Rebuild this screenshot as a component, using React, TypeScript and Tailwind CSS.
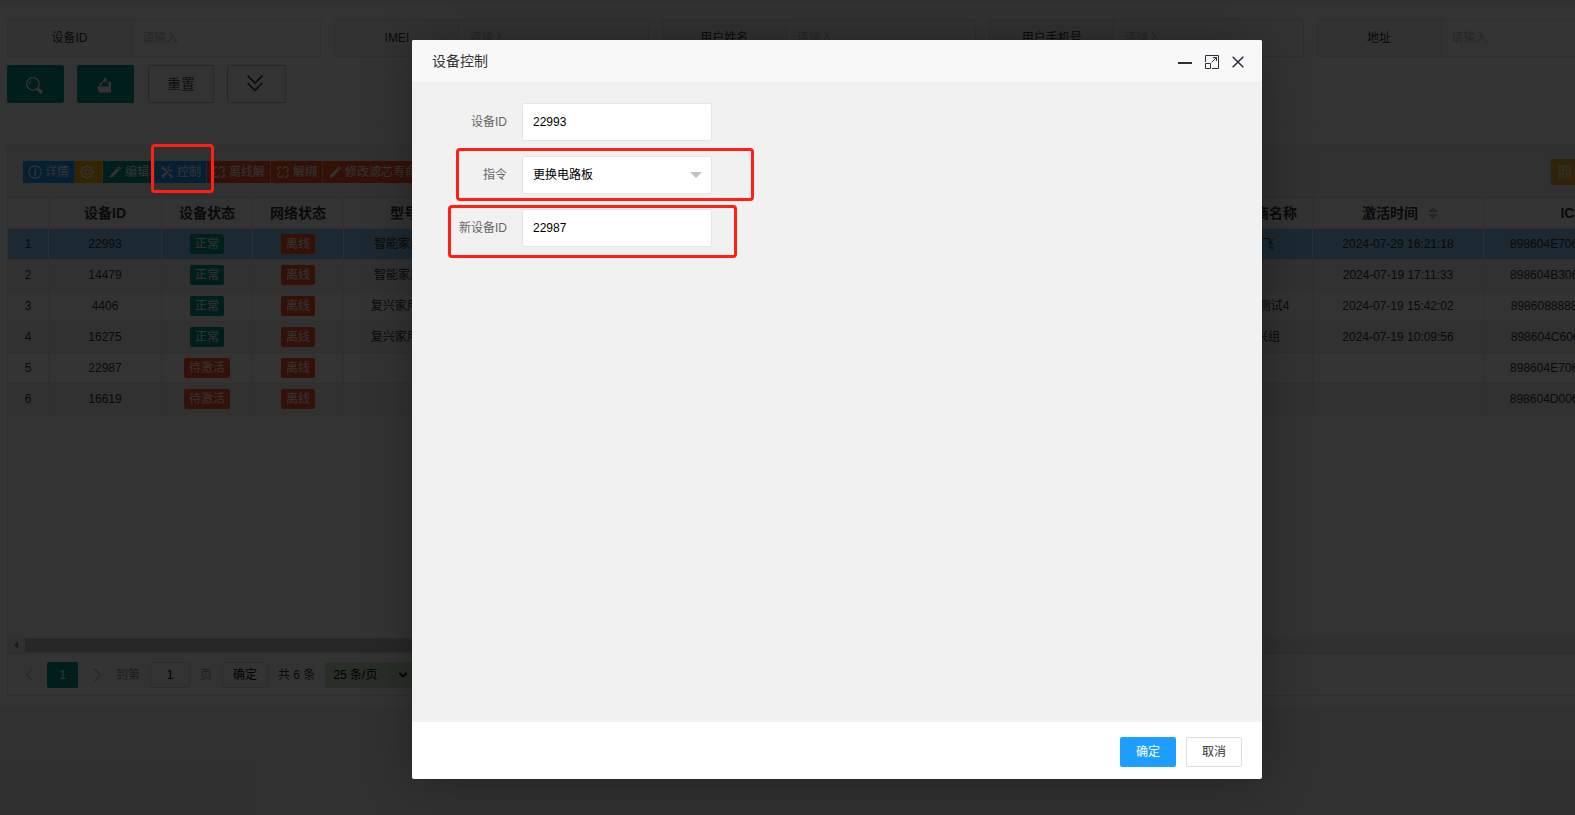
import type { ReactNode } from 'react';
import { ChevronDown } from 'lucide-react';

const filters = ['设备ID', 'IMEI', '用户姓名', '用户手机号', '地址'];

type Device = {
  id: string;
  active: boolean;
  model: string;
  vendor: string;
  time: string;
  iccid: string;
};

const devices: Device[] = [
  { id: '22993', active: true, model: '智能家居款', vendor: '小飞', time: '2024-07-29 16:21:18', iccid: '898604E70623D001C345' },
  { id: '14479', active: true, model: '智能家居款', vendor: '', time: '2024-07-19 17:11:33', iccid: '898604B30623D001C346' },
  { id: '4406', active: true, model: '复兴家用款1', vendor: '公司测试4', time: '2024-07-19 15:42:02', iccid: '8986088888012D4C5678' },
  { id: '16275', active: true, model: '复兴家用款1', vendor: '复兴组', time: '2024-07-19 10:09:56', iccid: '898604C60623D0012348' },
  { id: '22987', active: false, model: '', vendor: '', time: '', iccid: '898604E70623D001C349' },
  { id: '16619', active: false, model: '', vendor: '', time: '', iccid: '898604D00623D001C350' },
];

function Icon({ children, className = 'size-3.5' }: { children: ReactNode; className?: string }) {
  return (
    <svg viewBox="0 0 16 16" className={className} fill="none" stroke="currentColor" strokeWidth="1.2" aria-hidden="true">
      {children}
    </svg>
  );
}

const InfoIcon = () => (
  <Icon>
    <circle cx="8" cy="8" r="7" />
    <path d="M7 6.8h1.6L7.6 11.6h1.4M8.6 3.8v1.4" strokeWidth="1.4" />
  </Icon>
);

const GearIcon = () => (
  <Icon>
    <circle cx="8" cy="8" r="3" />
    <path d="M6.500 2.700 7 .700h2l.500 2 1.200.500 1.800-1.100 1.400 1.400-1.100 1.800.500 1.200 2 .500v2l-2 .500-.500 1.200 1.100 1.800-1.400 1.400-1.800-1.100-1.200.500-.500 2H7l-.500-2-1.200-.500-1.800 1.100-1.400-1.400 1.100-1.800-.500-1.200-2-.500V7l2-.500.500-1.200-1.100-1.800 1.400-1.400 1.800 1.100z" strokeLinejoin="round" />
  </Icon>
);

const PenIcon = () => (
  <Icon>
    <path d="M2 14.500l.8-3.200L10.600 3.500l2.400 2.400L5.200 13.700z M11.400 2.700l1.200-1.200 2.400 2.400-1.200 1.200z" fill="currentColor" stroke="none" />
  </Icon>
);

const ToolsIcon = () => (
  <Icon>
    <path d="M2.500 13.500L9 7.500M10 10l4 4M3 3l4 4" strokeWidth="2.400" />
    <path d="M1.500 4.500L4.500 1.500M11 1.500a3 3 0 0 0-1.500 4 3 3 0 0 0 4.800 0M1.500 11.500l3 3" strokeWidth="1.600" />
  </Icon>
);

const UnlinkIcon = () => (
  <Icon>
    <path d="M7.500 4.500L9 3a2.800 2.800 0 0 1 4 4l-1.500 1.500M8.500 11.500L7 13a2.800 2.800 0 0 1-4-4l1.500-1.500M5 1v2.500M1 4.500h2.500M2 1.800l1.500 1.500M11 15v-2.500M15 11.500h-2.500M14 14.200l-1.500-1.500" strokeWidth="1.400" />
  </Icon>
);

const actions: { label: string; color: string; icon: ReactNode }[] = [
  { label: '详情', color: 'bg-[#1e9fff]', icon: <InfoIcon /> },
  { label: '', color: 'bg-[#ffb800]', icon: <GearIcon /> },
  { label: '编辑', color: 'bg-[#009688]', icon: <PenIcon /> },
  { label: '控制', color: 'bg-[#1e9fff]', icon: <ToolsIcon /> },
  { label: '离线解', color: 'bg-[#ff5722]', icon: <UnlinkIcon /> },
  { label: '解绑', color: 'bg-[#ff5722]', icon: <UnlinkIcon /> },
  { label: '修改滤芯寿命', color: 'bg-[#ff5722]', icon: <PenIcon /> },
];

function Badge({ ok, children }: { ok: boolean; children: ReactNode }) {
  return (
    <span className={`inline-block h-5 rounded-xs px-[5px] align-middle leading-5 text-white ${ok ? 'bg-[#009688]' : 'bg-[#ff5722]'}`}>
      {children}
    </span>
  );
}

function SearchPanel() {
  return (
    <form className="border-b border-[#eee] px-[7px] pt-[15px] pb-[21px]" onSubmit={(e) => e.preventDefault()}>
      <div className="grid grid-cols-5 gap-[13px]">
        {filters.map((name) => (
          <div key={name} className="flex h-[38px] rounded-xs border border-[#e6e6e6]">
            <label htmlFor={`filter-${name}`} className="w-[124px] shrink-0 border-r border-[#e6e6e6] bg-[#fbfbfb] text-center leading-9">
              {name}
            </label>
            <input id={`filter-${name}`} placeholder="请输入" className="min-w-0 flex-1 px-2.5 placeholder:text-[#c0c0c0]" />
          </div>
        ))}
      </div>
      <div className="mt-2 flex h-[38px]">
        <button aria-label="搜索" className="mr-[13px] flex w-[57px] items-center justify-center rounded-xs bg-[#009688] pt-0.5 pr-[3px] text-white">
          <Icon className="size-[18px]">
            <circle cx="7" cy="7" r="5.600" />
            <path d="M4 7.500a3 3 0 0 1 1.500-3" strokeWidth="1" />
            <path d="M11 11l4 4" strokeWidth="2.800" />
          </Icon>
        </button>
        <button aria-label="导出" className="mr-3.5 flex w-[57px] items-center justify-center rounded-xs bg-[#009688] pt-0.5 pr-[3px] text-white">
          <Icon className="size-4">
            <path d="M1 9.500h2.500V6H6v1.200H4.700v2.300h7.800V6.200H11V5h4v10.500H3.200z" fill="currentColor" stroke="none" />
            <path d="M6.500 6.500c0-2.500.5-3.500 2.500-3.500M8.500 1L11 3 8.500 5z" fill="currentColor" strokeWidth="1" />
          </Icon>
        </button>
        <button className="mr-[13px] w-[66px] rounded-xs border border-[#c9c9c9] text-sm text-[#555]">重置</button>
        <button aria-label="展开" className="flex w-[59px] items-center justify-center rounded-xs border border-[#c9c9c9] pr-[3px] pb-0.5">
          <Icon className="size-[18px]">
            <path d="M1.500 1.500L8 8l6.500-6.500M1.500 8L8 14.500 14.500 8" strokeWidth="1.500" />
          </Icon>
        </button>
      </div>
    </form>
  );
}

function DeviceTable() {
  const cell = 'border-r border-b border-[#eaeaea] text-center';
  return (
    <div className="h-[439px] overflow-hidden">
      <table className="w-[1800px] table-fixed border-separate border-spacing-0">
        <colgroup>
          <col className="w-[41px]" />
          <col className="w-[113px]" />
          <col className="w-[91px]" />
          <col className="w-[91px]" />
          <col className="w-[121px]" />
          <col />
          <col className="w-[101px]" />
          <col className="w-[171px]" />
          <col className="w-[192px]" />
          <col className="w-[132px]" />
        </colgroup>
        <thead>
          <tr className="h-[31px] text-sm">
            {['', '设备ID', '设备状态', '网络状态', '型号', '用户', '供应商名称'].map((h) => (
              <th key={h} className={cell}>{h}</th>
            ))}
            <th className={cell}>
              <span className="flex items-center justify-center gap-2.5 pl-1">
                激活时间
                <svg viewBox="0 0 10 12" className="h-3 w-2.5 fill-[#b2b2b2]" aria-hidden="true">
                  <path d="M5 0l5 5H0zM0 7h10l-5 5z" />
                </svg>
              </span>
            </th>
            <th className={cell}>ICCID</th>
            <th className={cell}>备注</th>
          </tr>
        </thead>
        <tbody>
          {devices.map((d, i) => (
            <tr key={d.id} className={`h-[31px] ${i === 0 ? 'bg-[#8accf8]' : i % 2 ? 'bg-[#f2f2f2]' : 'bg-white'}`}>
              <td className={cell}>{i + 1}</td>
              <td className={cell}>{d.id}</td>
              <td className={cell}><Badge ok={d.active}>{d.active ? '正常' : '待激活'}</Badge></td>
              <td className={cell}><Badge ok={false}>离线</Badge></td>
              <td className={cell}>{d.model}</td>
              <td className={cell} />
              <td className={cell}>{d.vendor}</td>
              <td className={cell}>{d.time}</td>
              <td className={cell}>{d.iccid}</td>
              <td className={cell} />
            </tr>
          ))}
        </tbody>
      </table>
    </div>
  );
}

function Pagination() {
  return (
    <div className="flex h-[42px] items-center border-t border-[#e6e6e6] pl-[15px] text-[#333]">
      <button aria-label="上一页" className="flex w-6 justify-start text-[#d2d2d2]">
        <Icon className="size-3.5"><path d="M11 1L4 8l7 7" strokeWidth="1.800" /></Icon>
      </button>
      <button className="h-[26px] w-[31px] rounded-xs bg-[#009688] text-white">1</button>
      <button aria-label="下一页" className="flex w-[38px] justify-center text-[#c2c2c2]">
        <Icon className="size-3.5"><path d="M5 1l7 7-7 7" strokeWidth="1.800" /></Icon>
      </button>
      <label htmlFor="page" className="mr-2.5 text-[#999]">到第</label>
      <input id="page" defaultValue="1" className="mr-2.5 h-[26px] w-10 rounded-xs border border-[#e2e2e2] text-center text-black" />
      <span className="mr-2.5 text-[#999]">页</span>
      <button className="mr-2.5 h-[26px] w-[46px] rounded-xs border border-[#e2e2e2] text-black">确定</button>
      <span className="mr-2.5">共 6 条</span>
      <span className="relative flex items-center">
        <select aria-label="每页条数" className="h-[26px] w-[94px] appearance-none rounded-xs bg-[#cbe5c6] pl-2 text-black">
          <option>25 条/页</option>
        </select>
        <ChevronDown className="pointer-events-none absolute right-2.5 size-3 text-black" strokeWidth={4} aria-hidden="true" />
      </span>
    </div>
  );
}

function Highlight({ className }: { className: string }) {
  return <span className={`pointer-events-none absolute rounded-sm border-3 border-[#ff1f14] ${className}`} />;
}

function FormRow({ id, label, children, mark }: { id: string; label: string; children: ReactNode; mark?: string }) {
  return (
    <div className="relative flex h-[38px] items-center">
      <label htmlFor={id} className="w-[110px] shrink-0 pr-[15px] text-right text-[#666]">{label}</label>
      {children}
      {mark && <Highlight className={mark} />}
    </div>
  );
}

function ControlDialog() {
  const field = 'h-[38px] w-[190px] appearance-none rounded-xs border border-[#e6e6e6] bg-white px-2.5 text-black';
  return (
    <section role="dialog" aria-label="设备控制" className="flex h-[739px] w-[850px] flex-col overflow-hidden rounded-xs bg-white shadow-[1px_1px_50px_rgba(0,0,0,0.3)]">
      <header className="flex h-[43px] shrink-0 items-center border-b border-[#eee] bg-[#f8f8f8] pr-[18px] pl-5 text-[#2e2d3c]">
        <h2 className="flex-1 text-sm text-[#333]">设备控制</h2>
        <div className="flex items-center gap-[13px] pt-0.5">
          <button aria-label="最小化">
            <svg viewBox="0 0 14 14" className="size-3.5" aria-hidden="true"><path d="M0 8h14" stroke="currentColor" strokeWidth="2" /></svg>
          </button>
          <button aria-label="最大化">
            <svg viewBox="0 0 14 14" className="size-3.5" fill="none" stroke="currentColor" aria-hidden="true">
              <path d="M.500 7V.500h13v13H7M.500 8.500h5v5h-5zM6.500 7.500l5-5M8 2.500h3.500V6" />
            </svg>
          </button>
          <button aria-label="关闭">
            <svg viewBox="0 0 12 12" className="size-3" fill="none" stroke="currentColor" strokeWidth="1.500" aria-hidden="true">
              <path d="M.700.700l10.600 10.600M11.300.700L.700 11.300" />
            </svg>
          </button>
        </div>
      </header>
      <form className="flex flex-1 flex-col gap-[15px] bg-[#f1f1f1] pt-5" onSubmit={(e) => e.preventDefault()}>
        <FormRow id="device-id" label="设备ID">
          <input id="device-id" defaultValue="22993" className={field} />
        </FormRow>
        <FormRow id="command" label="指令" mark="-top-2 left-11 h-[53px] w-[298px]">
          <select id="command" className={field}>
            <option>更换电路板</option>
          </select>
          <svg viewBox="0 0 12 6" className="-ml-[22px] h-1.5 w-3 fill-[#c2c2c2]" aria-hidden="true"><path d="M0 0h12L6 6z" /></svg>
        </FormRow>
        <FormRow id="new-id" label="新设备ID" mark="-top-1 left-9 h-[53px] w-[289px]">
          <input id="new-id" defaultValue="22987" className={field} />
        </FormRow>
      </form>
      <footer className="flex h-[57px] shrink-0 items-center justify-end gap-2.5 pr-5 pt-[3px]">
        <button className="h-[30px] w-14 rounded-xs bg-[#1e9fff] text-white">确定</button>
        <button className="h-[30px] w-14 rounded-xs border border-[#dedede] text-[#333]">取消</button>
      </footer>
    </section>
  );
}

export default function App() {
  return (
    <div className="relative min-h-screen overflow-hidden bg-[#f2f2f2] font-['Liberation_Sans','Noto_Sans_CJK_SC',sans-serif] text-xs text-[#333]">
      <main className="mt-1 -mr-[63px] bg-white pb-2.5">
        <SearchPanel />
        <div className="mt-5 ml-[7px] border border-[#e6e6e6]">
          <div className="flex h-[52px] items-start justify-between border-b border-[#e6e6e6] bg-[#f2f2f2] pl-[15px]">
            <div className="flex pt-[15px]">
              {actions.map((a, i) => (
                <button key={i} aria-label={a.label || '设置'} className={`flex h-[22px] items-center border-r border-white/50 px-[5px] text-white ${a.color}`}>
                  <span className="mr-[3px]">{a.icon}</span>
                  {a.label}
                </button>
              ))}
            </div>
            <button aria-label="筛选列" className="mt-[13px] mr-[52px] flex h-[26px] w-[34px] items-center bg-[#f5b03a] pl-[7px] text-white">
              <Icon className="size-3.5">
                <path d="M1 1h5v5H1zM9 1h5v5H9zM2 8v7M5.500 8v7M10 8v7M13.500 8v7" />
              </Icon>
            </button>
          </div>
          <DeviceTable />
          <div className="flex h-4 items-center bg-[#f1f1f1]">
            <svg viewBox="0 0 4 8" className="mx-1.5 h-2 w-1 fill-[#7f7f7f]" aria-hidden="true"><path d="M4 0v8L0 4z" /></svg>
            <div className="ml-px h-[13px] w-1/2 bg-[#c1c1c1]" />
          </div>
          <Pagination />
        </div>
      </main>
      <div className="absolute inset-0 bg-black/80" />
      <Highlight className="top-36 left-[151px] h-[49px] w-[63px]" />
      <div className="absolute inset-x-0 top-10 flex justify-center pl-[99px]">
        <ControlDialog />
      </div>
    </div>
  );
}
